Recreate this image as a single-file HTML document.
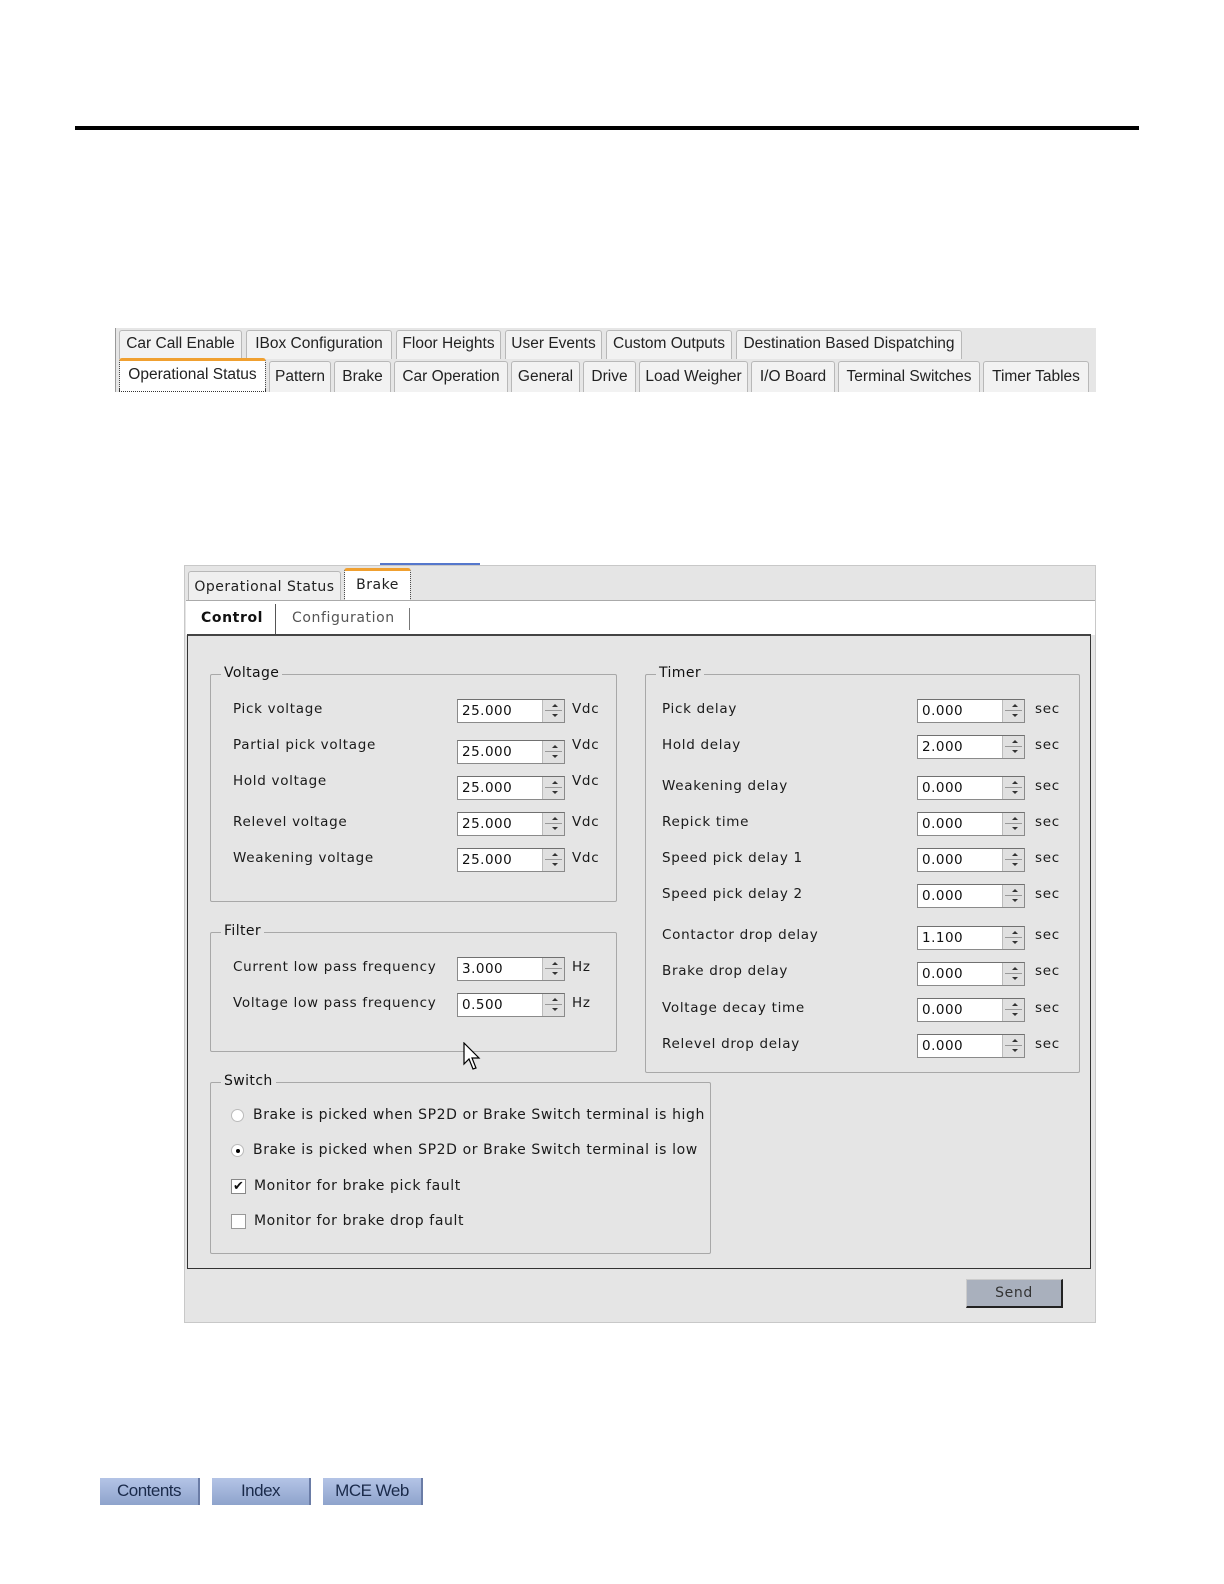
<!DOCTYPE html>
<html><head><meta charset="utf-8">
<style>
*{box-sizing:border-box;margin:0;padding:0}
html,body{width:1224px;height:1584px;overflow:hidden}
body{background:#fff;position:relative;font-family:"DejaVu Sans","Liberation Sans",sans-serif;color:#111}
.a{position:absolute}
.t{position:absolute;font-family:"Liberation Sans",sans-serif;font-size:15.5px;background:#f2f2f2;border:1px solid #b8b8b8;border-bottom:none;border-radius:3px 3px 0 0;text-align:center;line-height:26px;color:#222;white-space:nowrap}
.lbl{position:absolute;font-size:13.5px;letter-spacing:0.7px;white-space:nowrap;color:#1a1a1a}
.inp{position:absolute;width:108px;height:24px;background:#fff;border:1px solid #8a8a8a;border-top-color:#707070;font-size:13.5px;letter-spacing:0.5px;line-height:22px;padding-left:4px}
.sp{position:absolute;right:0;top:0;width:22px;height:22px;background:#e0e0e0;border-left:1px solid #bbb}
.sp:before{content:"";position:absolute;left:9px;top:4px;border:3px solid transparent;border-bottom-color:#333;border-top:none}
.sp:after{content:"";position:absolute;left:9px;top:14px;border:3px solid transparent;border-top-color:#333;border-bottom:none}
.sp i{position:absolute;left:2px;right:2px;top:10px;height:1px;background:#999}
.grp{position:absolute;border:1px solid #a8a8a8;border-radius:2px}
.gl{position:absolute;top:-10px;left:10px;background:#e5e5e5;padding:0 3px;font-size:14px;letter-spacing:0.4px}
</style></head><body>
<div class="a" style="left:75px;top:126px;width:1064px;height:4px;background:#000"></div>

<div class="a" style="left:115px;top:328px;width:981px;height:64px;background:#e6e6e6;border-left:1px solid #999"></div>
<div class="t" style="left:119px;top:330px;width:123px;height:29px">Car Call Enable</div>
<div class="t" style="left:246px;top:330px;width:146px;height:29px">IBox Configuration</div>
<div class="t" style="left:396px;top:330px;width:105px;height:29px">Floor Heights</div>
<div class="t" style="left:505px;top:330px;width:97px;height:29px">User Events</div>
<div class="t" style="left:606px;top:330px;width:126px;height:29px">Custom Outputs</div>
<div class="t" style="left:736px;top:330px;width:226px;height:29px">Destination Based Dispatching</div>
<div class="t" style="left:119px;top:358px;width:147px;height:34px;background:#fff;border:1px dotted #333;border-top:3px solid #f0a030;line-height:28px">Operational Status</div>
<div class="t" style="left:269px;top:361px;width:62px;height:31px;line-height:30px">Pattern</div>
<div class="t" style="left:334px;top:361px;width:57px;height:31px;line-height:30px">Brake</div>
<div class="t" style="left:394px;top:361px;width:114px;height:31px;line-height:30px">Car Operation</div>
<div class="t" style="left:511px;top:361px;width:69px;height:31px;line-height:30px">General</div>
<div class="t" style="left:583px;top:361px;width:53px;height:31px;line-height:30px">Drive</div>
<div class="t" style="left:639px;top:361px;width:109px;height:31px;line-height:30px">Load Weigher</div>
<div class="t" style="left:751px;top:361px;width:84px;height:31px;line-height:30px">I/O Board</div>
<div class="t" style="left:838px;top:361px;width:142px;height:31px;line-height:30px">Terminal Switches</div>
<div class="t" style="left:983px;top:361px;width:106px;height:31px;line-height:30px">Timer Tables</div>

<!-- panel -->
<div class="a" style="left:380px;top:563px;width:100px;height:2px;background:#5577cc"></div>
<div class="a" style="left:184px;top:565px;width:912px;height:758px;background:#e5e5e5;border:1px solid #c8c8c8"></div>
<div class="t" style="left:188px;top:571px;width:153px;height:30px;font-family:'DejaVu Sans',sans-serif;font-size:14px;letter-spacing:0.5px;line-height:30px;background:#efefef">Operational Status</div>
<div class="t" style="left:344px;top:568px;width:67px;height:33px;font-family:'DejaVu Sans',sans-serif;font-size:14px;letter-spacing:0.5px;line-height:28px;background:#fff;border:1px dotted #333;border-top:3px solid #f0a030">Brake</div>
<div class="a" style="left:186px;top:600px;width:909px;height:35px;background:#fff;border-top:1px solid #aaa"></div>
<div class="a" style="left:201px;top:610px;font-size:14px;font-weight:bold;letter-spacing:0.6px">Control</div>
<div class="a" style="left:275px;top:604px;width:1px;height:31px;background:#555"></div>
<div class="a" style="left:292px;top:610px;font-size:14px;letter-spacing:0.6px;color:#555">Configuration</div>
<div class="a" style="left:409px;top:608px;width:1px;height:22px;background:#777"></div>
<div class="a" style="left:187px;top:634px;width:904px;height:635px;border:1px solid #333;border-top:2px solid #444;background:#e5e5e5"></div>

<div class="grp" style="left:210px;top:674px;width:407px;height:228px"><span class="gl">Voltage</span></div>
<div class="grp" style="left:210px;top:932px;width:407px;height:120px"><span class="gl">Filter</span></div>
<div class="grp" style="left:645px;top:674px;width:435px;height:399px"><span class="gl">Timer</span></div>
<div class="grp" style="left:210px;top:1082px;width:501px;height:172px"><span class="gl">Switch</span></div>

<div class="lbl" style="left:233px;top:701px">Pick voltage</div>
<div class="lbl" style="left:233px;top:737px">Partial pick voltage</div>
<div class="lbl" style="left:233px;top:773px">Hold voltage</div>
<div class="lbl" style="left:233px;top:814px">Relevel voltage</div>
<div class="lbl" style="left:233px;top:850px">Weakening voltage</div>
<div class="inp" style="left:457px;top:699px">25.000<span class="sp"><i></i></span></div>
<div class="inp" style="left:457px;top:740px">25.000<span class="sp"><i></i></span></div>
<div class="inp" style="left:457px;top:776px">25.000<span class="sp"><i></i></span></div>
<div class="inp" style="left:457px;top:812px">25.000<span class="sp"><i></i></span></div>
<div class="inp" style="left:457px;top:848px">25.000<span class="sp"><i></i></span></div>
<div class="lbl" style="left:572px;top:701px">Vdc</div>
<div class="lbl" style="left:572px;top:737px">Vdc</div>
<div class="lbl" style="left:572px;top:773px">Vdc</div>
<div class="lbl" style="left:572px;top:814px">Vdc</div>
<div class="lbl" style="left:572px;top:850px">Vdc</div>

<div class="lbl" style="left:233px;top:959px">Current low pass frequency</div>
<div class="lbl" style="left:233px;top:995px">Voltage low pass frequency</div>
<div class="inp" style="left:457px;top:957px">3.000<span class="sp"><i></i></span></div>
<div class="inp" style="left:457px;top:993px">0.500<span class="sp"><i></i></span></div>
<div class="lbl" style="left:572px;top:959px">Hz</div>
<div class="lbl" style="left:572px;top:995px">Hz</div>

<div class="lbl" style="left:662px;top:701px">Pick delay</div>
<div class="lbl" style="left:662px;top:737px">Hold delay</div>
<div class="lbl" style="left:662px;top:778px">Weakening delay</div>
<div class="lbl" style="left:662px;top:814px">Repick time</div>
<div class="lbl" style="left:662px;top:850px">Speed pick delay 1</div>
<div class="lbl" style="left:662px;top:886px">Speed pick delay 2</div>
<div class="lbl" style="left:662px;top:927px">Contactor drop delay</div>
<div class="lbl" style="left:662px;top:963px">Brake drop delay</div>
<div class="lbl" style="left:662px;top:1000px">Voltage decay time</div>
<div class="lbl" style="left:662px;top:1036px">Relevel drop delay</div>
<div class="inp" style="left:917px;top:699px">0.000<span class="sp"><i></i></span></div>
<div class="inp" style="left:917px;top:735px">2.000<span class="sp"><i></i></span></div>
<div class="inp" style="left:917px;top:776px">0.000<span class="sp"><i></i></span></div>
<div class="inp" style="left:917px;top:812px">0.000<span class="sp"><i></i></span></div>
<div class="inp" style="left:917px;top:848px">0.000<span class="sp"><i></i></span></div>
<div class="inp" style="left:917px;top:884px">0.000<span class="sp"><i></i></span></div>
<div class="inp" style="left:917px;top:926px">1.100<span class="sp"><i></i></span></div>
<div class="inp" style="left:917px;top:962px">0.000<span class="sp"><i></i></span></div>
<div class="inp" style="left:917px;top:998px">0.000<span class="sp"><i></i></span></div>
<div class="inp" style="left:917px;top:1034px">0.000<span class="sp"><i></i></span></div>
<div class="lbl" style="left:1035px;top:701px">sec</div>
<div class="lbl" style="left:1035px;top:737px">sec</div>
<div class="lbl" style="left:1035px;top:778px">sec</div>
<div class="lbl" style="left:1035px;top:814px">sec</div>
<div class="lbl" style="left:1035px;top:850px">sec</div>
<div class="lbl" style="left:1035px;top:886px">sec</div>
<div class="lbl" style="left:1035px;top:927px">sec</div>
<div class="lbl" style="left:1035px;top:963px">sec</div>
<div class="lbl" style="left:1035px;top:1000px">sec</div>
<div class="lbl" style="left:1035px;top:1036px">sec</div>

<svg class="a" style="left:463px;top:1042px" width="20" height="30" viewBox="0 0 20 30"><path d="M1 1 L1 22 L6 17 L10 27 L13 26 L9 16 L16 16 Z" fill="#fff" stroke="#000" stroke-width="1.2"/></svg>

<div class="a" style="left:231px;top:1109px;width:13px;height:13px;border-radius:50%;background:#fff;border:1px solid #bbb"></div>
<div class="lbl" style="left:253px;top:1107px;font-size:14px;letter-spacing:0.6px">Brake is picked when SP2D or Brake Switch terminal is high</div>
<div class="a" style="left:231px;top:1144px;width:13px;height:13px;border-radius:50%;background:#fff;border:1px solid #bbb"><div class="a" style="left:4px;top:4px;width:4px;height:4px;border-radius:50%;background:#000"></div></div>
<div class="lbl" style="left:253px;top:1142px;font-size:14px;letter-spacing:0.6px">Brake is picked when SP2D or Brake Switch terminal is low</div>
<div class="a" style="left:231px;top:1179px;width:15px;height:15px;background:#fff;border:1px solid #888;font-size:13px;line-height:13px;text-align:center;font-weight:bold">✔</div>
<div class="lbl" style="left:254px;top:1178px;font-size:14px;letter-spacing:0.6px">Monitor for brake pick fault</div>
<div class="a" style="left:231px;top:1214px;width:15px;height:15px;background:#fff;border:1px solid #999"></div>
<div class="lbl" style="left:254px;top:1213px;font-size:14px;letter-spacing:0.6px">Monitor for brake drop fault</div>

<div class="a" style="left:966px;top:1279px;width:97px;height:29px;background:#a9b0bd;border:1px solid #ccc;border-right:2px solid #222;border-bottom:2px solid #222;text-align:center;line-height:26px;font-size:14px;letter-spacing:0.6px;color:#333">Send</div>

<div class="a" style="left:100px;top:1478px;width:100px;height:27px;background:linear-gradient(#b4c4e6,#8ea3cc);border-right:2px solid #6a7ca6;font-family:'Liberation Sans',sans-serif;font-size:17px;letter-spacing:-0.5px;text-align:center;line-height:26px;color:#1a2a4a">Contents</div>
<div class="a" style="left:212px;top:1478px;width:99px;height:27px;background:linear-gradient(#b4c4e6,#8ea3cc);border-right:2px solid #6a7ca6;font-family:'Liberation Sans',sans-serif;font-size:17px;letter-spacing:-0.5px;text-align:center;line-height:26px;color:#1a2a4a">Index</div>
<div class="a" style="left:323px;top:1478px;width:100px;height:27px;background:linear-gradient(#b4c4e6,#8ea3cc);border-right:2px solid #6a7ca6;font-family:'Liberation Sans',sans-serif;font-size:17px;letter-spacing:-0.5px;text-align:center;line-height:26px;color:#1a2a4a">MCE Web</div>
</body></html>
